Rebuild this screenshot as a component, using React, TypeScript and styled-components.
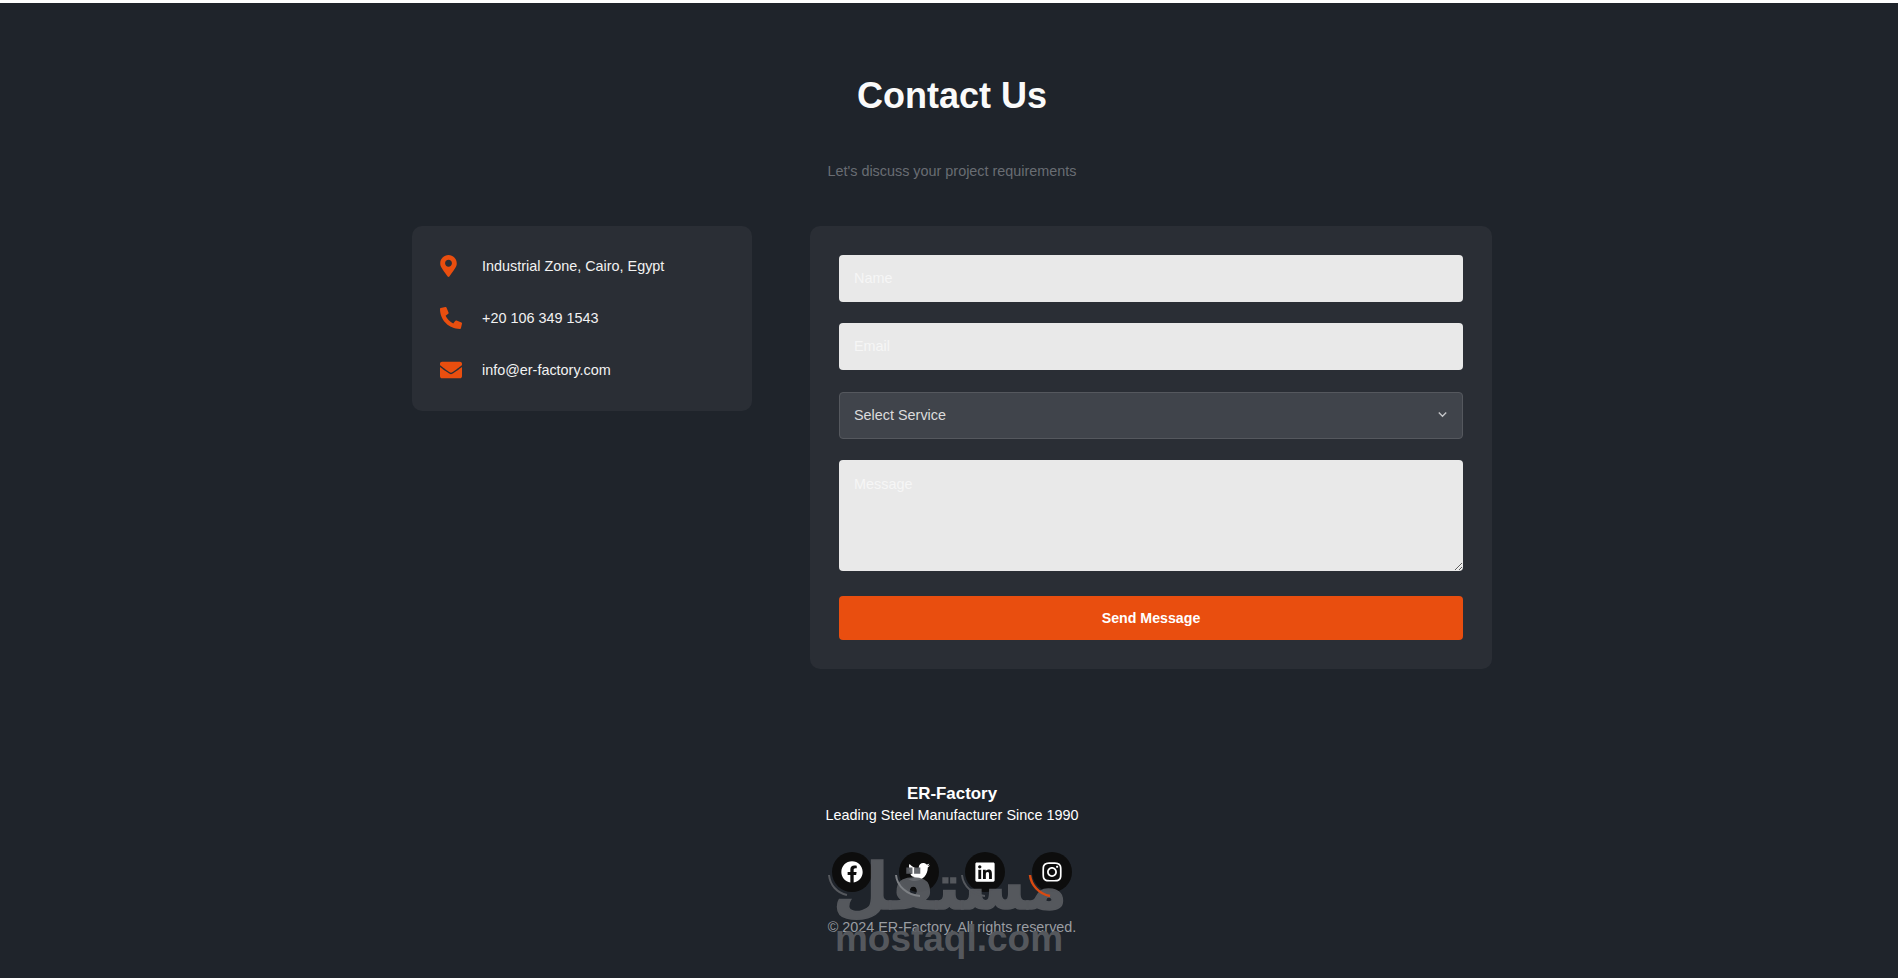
// Pagina de contacto de ER-Factory
import React from 'react';
import styled, { createGlobalStyle } from 'styled-components';
import {
  FaEnvelope,
  FaFacebook,
  FaInstagram,
  FaLinkedin,
  FaMapMarkerAlt,
  FaPhoneAlt,
  FaTwitter,
} from 'react-icons/fa';

const GlobalStyle = createGlobalStyle`
  html, body {
    margin: 0;
    padding: 0;
    background-color: #1f242b;
    overflow: hidden;
  }
  body {
    font-family: "Liberation Sans", Arial, sans-serif;
  }
`;

const Page = styled.div`
  position: relative;
  height: 978px;
  overflow: hidden;
  border-top: 3px solid #fff;
  box-sizing: border-box;
  padding-left: 6px;
  color: #fff;
`;

const ContactSection = styled.section`
  width: 1080px;
  margin: 0 auto;
  padding-top: 72px;
`;

const Title = styled.h1`
  margin: 0 0 47px;
  font-size: 36px;
  line-height: 41px;
  font-weight: 700;
  text-align: center;
  color: #fafafa;
`;

const Subtitle = styled.p`
  margin: 0 0 47px;
  font-size: 14.4px;
  line-height: 16px;
  text-align: center;
  color: #696d73;
`;

const Columns = styled.div`
  display: grid;
  grid-template-columns: 340px 682px;
  column-gap: 58px;
  align-items: start;
`;

const Card = styled.div`
  background-color: #2a2e35;
  border-radius: 10px;
  padding: 29px;
`;

const InfoCard = styled(Card)`
  padding: 29px 28px;
`;

const InfoList = styled.div`
  display: flex;
  flex-direction: column;
  gap: 30px;
  padding-bottom: 1px;
`;

const InfoRow = styled.div`
  display: flex;
  align-items: center;
  height: 22px;
  font-size: 14.4px;
  color: #f2f2f2;
`;

const InfoIcon = styled.span<{ $iconWidth: number }>`
  display: flex;
  width: 42px;
  flex-shrink: 0;
  color: #e94e0f;

  svg {
    width: ${(props) => props.$iconWidth}px;
    height: 22px;
  }
`;

const Form = styled.form`
  display: flex;
  flex-direction: column;
`;

const TextInput = styled.input`
  box-sizing: border-box;
  width: 100%;
  height: 47px;
  margin-bottom: 21px;
  padding: 0 15px 2px;
  border: none;
  border-radius: 4px;
  background-color: #e9e9e9;
  font-family: inherit;
  font-size: 14.4px;
  outline: none;

  &::placeholder {
    color: #f6f6f6;
    opacity: 1;
  }
`;

const SelectWrap = styled.div`
  position: relative;
  margin-bottom: 21px;
  margin-top: 1px;
`;

const ServiceSelect = styled.select`
  display: block;
  box-sizing: border-box;
  width: 100%;
  height: 47px;
  padding: 0 14px 2px;
  border: 1px solid #55585e;
  border-radius: 4px;
  background-color: #40444b;
  color: #dcdcdc;
  font-family: inherit;
  font-size: 14.4px;
  appearance: none;
  outline: none;
`;

const Chevron = styled.svg`
  position: absolute;
  top: 19px;
  right: 16px;
  width: 9px;
  height: 7px;
  pointer-events: none;
`;

const MessageArea = styled.textarea`
  display: block;
  box-sizing: border-box;
  width: 100%;
  height: 111px;
  margin-bottom: 25px;
  padding: 15px;
  border: none;
  border-radius: 4px;
  background-color: #e9e9e9;
  font-family: inherit;
  font-size: 14.4px;
  line-height: 18px;
  outline: none;

  &::placeholder {
    color: #f6f6f6;
    opacity: 1;
  }
`;

const SendButton = styled.button`
  height: 44px;
  border: none;
  border-radius: 4px;
  background-color: #e94e0f;
  color: #fff;
  font-family: inherit;
  font-size: 14.2px;
  font-weight: 700;
`;

const Footer = styled.footer`
  margin-top: 116px;
  text-align: center;
`;

const Brand = styled.div`
  font-size: 16.9px;
  font-weight: 700;
  line-height: 18px;
  margin-bottom: 4px;
`;

const Tagline = styled.div`
  font-size: 14.4px;
  line-height: 16px;
  margin-bottom: 29px;
`;

const SocialRow = styled.div`
  display: flex;
  justify-content: center;
  gap: 26.5px;
  margin-bottom: 27px;
`;

const SocialLink = styled.a`
  display: flex;
  align-items: center;
  justify-content: center;
  width: 40px;
  height: 40px;
  border-radius: 50%;
  background-color: #0d0d0d;
  color: #fff;
  font-size: 22px;
`;

const Copyright = styled.div`
  font-size: 14.4px;
  line-height: 16px;
  color: #9a9da2;
`;

// Marca de agua que queda por encima de todo el pie
const Watermark = styled.div`
  position: absolute;
  left: 833px;
  top: 840px;
  width: 232px;
  height: 125px;
  pointer-events: none;
  color: #5a5d62;
  opacity: 0.92;
  text-align: center;
`;

const WatermarkArcs = styled.svg`
  position: absolute;
  inset: 0;
  width: 232px;
  height: 125px;
  overflow: visible;
`;

const WatermarkArabic = styled.div`
  position: absolute;
  left: 0;
  right: 0;
  top: -6px;
  font-family: "DejaVu Sans", sans-serif;
  font-size: 64px;
  line-height: 100px;
  font-weight: 700;
  -webkit-text-stroke: 1.5px #5a5d62;
`;

const WatermarkLatin = styled.div`
  position: absolute;
  left: 0;
  right: 0;
  top: 76px;
  font-family: "Liberation Sans", Arial, sans-serif;
  font-size: 37px;
  line-height: 40px;
  font-weight: 700;
`;

const contactItems = [
  { id: 1, icon: <FaMapMarkerAlt />, iconWidth: 17, text: 'Industrial Zone, Cairo, Egypt' },
  { id: 2, icon: <FaPhoneAlt />, iconWidth: 22, text: '+20 106 349 1543' },
  { id: 3, icon: <FaEnvelope />, iconWidth: 22, text: 'info@er-factory.com' },
];

const socialItems = [
  { id: 'facebook', icon: <FaFacebook /> },
  { id: 'twitter', icon: <FaTwitter /> },
  { id: 'linkedin', icon: <FaLinkedin /> },
  { id: 'instagram', icon: <FaInstagram /> },
];

const App: React.FC = () => {
  return (
    <Page>
      <GlobalStyle />
      <ContactSection>
        <Title>Contact Us</Title>
        <Subtitle>Let's discuss your project requirements</Subtitle>
        <Columns>
          <InfoCard>
            <InfoList>
              {contactItems.map((item) => (
                <InfoRow key={item.id}>
                  <InfoIcon $iconWidth={item.iconWidth}>{item.icon}</InfoIcon>
                  {item.text}
                </InfoRow>
              ))}
            </InfoList>
          </InfoCard>
          <Card>
            <Form onSubmit={(e) => e.preventDefault()}>
              <TextInput type="text" placeholder="Name" />
              <TextInput type="email" placeholder="Email" />
              <SelectWrap>
                <ServiceSelect defaultValue="">
                  <option value="">Select Service</option>
                </ServiceSelect>
                <Chevron viewBox="0 0 9 7" fill="none" stroke="#c4c5c8" strokeWidth="1.4">
                  <path d="M.8 1.5l3.7 3.7 3.7-3.7" />
                </Chevron>
              </SelectWrap>
              <MessageArea placeholder="Message" />
              <SendButton type="submit">Send Message</SendButton>
            </Form>
          </Card>
        </Columns>
      </ContactSection>
      <Footer>
        <Brand>ER-Factory</Brand>
        <Tagline>Leading Steel Manufacturer Since 1990</Tagline>
        <SocialRow>
          {socialItems.map((item) => (
            <SocialLink key={item.id} href="#">
              {item.icon}
            </SocialLink>
          ))}
        </SocialRow>
        <Copyright>© 2024 ER-Factory. All rights reserved.</Copyright>
      </Footer>
      <Watermark>
        <WatermarkArabic>مستقل</WatermarkArabic>
        <WatermarkArcs viewBox="0 0 232 125" fill="none">
          <path d="M-4 32c1 10 8 18 18 20" stroke="#5a5d62" strokeWidth="2" />
          <path d="M63 32c1 11 11 20 24 21" stroke="#85888c" strokeWidth="2" />
          <path d="M129 32c1 11 11 20 23 21" stroke="#5a5d62" strokeWidth="2" />
          <path d="M197 32c1 10 9 19 20 21" stroke="#e94e0f" strokeWidth="2.5" />
        </WatermarkArcs>
        <WatermarkLatin>mostaql.com</WatermarkLatin>
      </Watermark>
    </Page>
  );
};

export default App;
